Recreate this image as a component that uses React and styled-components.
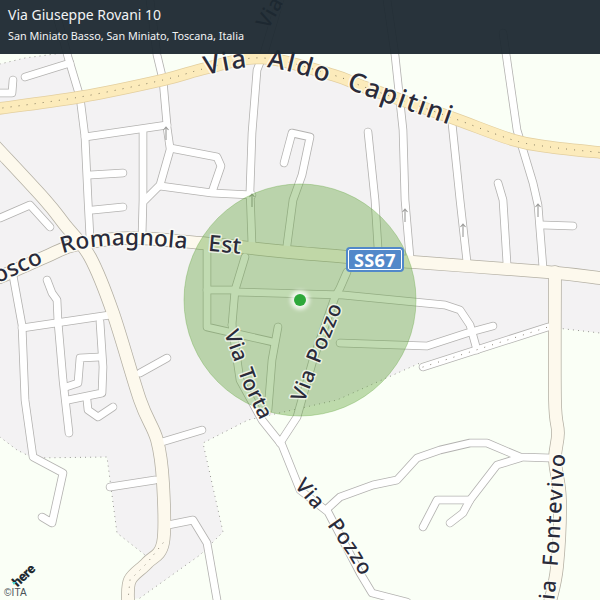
import React from "react";
import styled, { createGlobalStyle } from "styled-components";

const Global = createGlobalStyle`
  html, body { margin: 0; padding: 0; background: #faFFF6; }
`;

const Stage = styled.div`
  position: relative;
  width: 600px;
  height: 600px;
  overflow: hidden;
  font-family: "Noto Sans", "Open Sans", sans-serif;
`;

const MapSvg = styled.svg`
  display: block;
  width: 600px;
  height: 600px;
  background: #faFFF6;
`;

const Header = styled.header`
  position: absolute;
  inset: 0 0 auto 0;
  height: 54px;
  box-sizing: border-box;
  padding: 5px 8px 0;
  display: flex;
  flex-direction: column;
  gap: 2px;
  background: rgba(28, 40, 48, 0.95);
  color: #f2f4f5;
`;

const Title = styled.div`
  font-size: 14px;
  line-height: 19px;
  white-space: nowrap;
`;

const Subtitle = styled.div`
  font-size: 10.8px;
  line-height: 19px;
  white-space: nowrap;
`;

const Shield = styled.div`
  position: absolute;
  left: 346px;
  top: 247px;
  width: 58px;
  height: 25px;
  box-sizing: border-box;
  padding: 2px;
  border-radius: 4px;
  background: #5288c9;
`;

const ShieldInner = styled.div`
  width: 100%;
  height: 100%;
  box-sizing: border-box;
  border: 1.5px solid #ffffff;
  border-radius: 2px;
  display: flex;
  align-items: center;
  justify-content: center;
  color: #ffffff;
  font-size: 18px;
  line-height: 18px;
  font-weight: 700;
  letter-spacing: 0.4px;
`;

const Attribution = styled.div`
  position: absolute;
  left: 4px;
  bottom: 2px;
  width: 40px;
  display: flex;
  flex-direction: column;
  align-items: flex-start;
`;

const LogoMark = styled.div`
  position: relative;
  height: 23px;
  width: 36px;
`;

const LogoWord = styled.span`
  position: absolute;
  left: 7px;
  top: 5px;
  font-family: Roboto, "Liberation Sans", sans-serif;
  font-size: 13.5px;
  line-height: 13px;
  font-weight: 900;
  letter-spacing: -0.5px;
  color: #1f2a30;
  transform: rotate(-43deg);
`;

const LogoTick = styled.span`
  position: absolute;
  left: 8px;
  top: 18px;
  width: 0;
  height: 0;
  border-left: 2.5px solid transparent;
  border-right: 2.5px solid transparent;
  border-top: 3.5px solid #48dad0;
`;

const Copyright = styled.div`
  font-family: "Liberation Sans", sans-serif;
  font-size: 10px;
  line-height: 11px;
  letter-spacing: 0.2px;
  color: #4b5358;
`;

const Label = styled.text`
  font-family: "Noto Sans", "Open Sans", sans-serif;
  font-size: ${(p) => p.$size}px;
  font-weight: 500;
  letter-spacing: ${(p) => p.$spacing ?? 0}px;
  word-spacing: ${(p) => p.$words ?? 0}px;
  fill: #2a2b3a;
  stroke: rgba(255, 255, 250, 0.72);
  stroke-width: 3px;
  stroke-linejoin: round;
  paint-order: stroke;
`;

const Casing = styled.path`
  fill: none;
  stroke: ${(p) => p.$color};
  stroke-width: ${(p) => p.$width}px;
  stroke-linecap: round;
  stroke-linejoin: round;
`;

const Dots = styled.path`
  fill: none;
  stroke: ${(p) => p.$color || "#7b7466"};
  stroke-width: ${(p) => p.$width || 1}px;
  stroke-linecap: round;
  stroke-dasharray: 0.1 ${(p) => p.$gap || 8}px;
`;

const poly = (pts) => "M" + pts.map((p) => p.join(" ")).join("L");

const smooth = (pts) => {
  let d = `M${pts[0][0]} ${pts[0][1]}`;
  for (let i = 0; i < pts.length - 1; i++) {
    const p0 = pts[i - 1] || pts[i];
    const p1 = pts[i];
    const p2 = pts[i + 1];
    const p3 = pts[i + 2] || p2;
    const c1 = [p1[0] + (p2[0] - p0[0]) / 6, p1[1] + (p2[1] - p0[1]) / 6];
    const c2 = [p2[0] - (p3[0] - p1[0]) / 6, p2[1] - (p3[1] - p1[1]) / 6];
    d += `C${c1[0].toFixed(1)} ${c1[1].toFixed(1)} ${c2[0].toFixed(1)} ${c2[1].toFixed(1)} ${p2[0]} ${p2[1]}`;
  }
  return d;
};

const builtUp = [
  [0, 64], [25, 58], [70, 52], [78, 95], [163, 80], [263, 58], [333, 75], [450, 117],
  [513, 140], [600, 152], [600, 333], [548, 327], [420, 363], [337, 400], [248, 420],
  [203, 443], [223, 532], [200, 555], [140, 598], [128, 600], [128, 580], [145, 555],
  [117, 533], [107, 457], [33, 458], [17, 450], [0, 437],
];

const boundary = [
  [[0, 64], [25, 58], [70, 52]],
  [[0, 437], [17, 450], [33, 458], [107, 457], [117, 533], [145, 555]],
  [[140, 598], [200, 555], [223, 532], [203, 443], [248, 420], [337, 400], [420, 363]],
  [[548, 327], [600, 333]],
];

const localRoads = [
  [[58, 20], [68, 57], [80, 97], [85, 137], [88, 200], [90, 238]],
  [[150, 0], [157, 55], [163, 80], [167, 125]],
  [[85, 137], [167, 125]],
  [[143, 132], [143, 200], [142, 236]],
  [[167, 127], [170, 148], [217, 157], [221, 166], [212, 192]],
  [[170, 150], [160, 185], [145, 200]],
  [[160, 186], [212, 193], [252, 195]],
  [[90, 175], [123, 173]],
  [[280, 0], [265, 50], [257, 70], [252, 133], [250, 190], [252, 245]],
  [[284, 163], [292, 133], [310, 137], [302, 175], [293, 200], [287, 245]],
  [[387, 0], [395, 55], [403, 130], [405, 200], [410, 258]],
  [[368, 132], [375, 200], [378, 248]],
  [[452, 123], [460, 200], [467, 262]],
  [[498, 183], [503, 200], [507, 264]],
  [[503, 33], [517, 130], [533, 183], [538, 205], [543, 268]],
  [[543, 225], [573, 226]],
  [[25, 77], [70, 63]],
  [[0, 93], [12, 93], [13, 80]],
  [[12, 270], [22, 325], [25, 400], [33, 457], [63, 473], [52, 523], [42, 517]],
  [[22, 328], [110, 315]],
  [[47, 280], [52, 293], [57, 300], [58, 322], [63, 380], [69, 433]],
  [[100, 322], [103, 367], [102, 393], [68, 400]],
  [[100, 357], [80, 358], [78, 383], [66, 387]],
  [[113, 407], [98, 417], [88, 410], [87, 400]],
  [[0, 218], [30, 205], [50, 227]],
  [[93, 210], [123, 207]],
  [[140, 373], [167, 358]],
  [[162, 442], [202, 430]],
  [[110, 487], [155, 480]],
  [[168, 525], [193, 520], [207, 543], [217, 600]],
  [[207, 250], [207, 327], [273, 342]],
  [[207, 290], [233, 290]],
  [[236, 292], [343, 295], [445, 305], [460, 310], [470, 325], [477, 350]],
  [[245, 257], [235, 290], [232, 325]],
  [[278, 327], [272, 360], [268, 410]],
  [[232, 325], [240, 380], [262, 420], [282, 445], [300, 490], [328, 512], [360, 573], [372, 593], [407, 602]],
  [[347, 272], [340, 288], [335, 297], [313, 360], [297, 417], [280, 443]],
  [[340, 343], [427, 346], [467, 333], [493, 326]],
  [[328, 508], [340, 497], [373, 485], [397, 480], [417, 458], [440, 450], [470, 443], [487, 443], [520, 457], [550, 458]],
  [[520, 458], [497, 465], [470, 500], [463, 513], [450, 523]],
  [[470, 500], [437, 500], [423, 527]],
  [[423, 367], [548, 327]],
];

const majorRoads = [
  [[0, 277], [45, 257], [75, 245], [130, 238], [200, 243], [300, 253], [413, 262], [547, 272], [600, 278]],
  [[555, 272], [555, 400], [558, 433], [555, 460], [560, 500], [557, 567], [550, 602]],
  [[-5, 146], [45, 200], [65, 225], [90, 257], [113, 313], [140, 400], [157, 440], [163, 483], [163, 543], [147, 563], [130, 580], [128, 602]],
];

const mainRoad = [
  [-5, 109], [80, 97], [163, 80], [207, 68], [263, 58], [333, 75], [367, 88], [450, 117], [513, 140], [550, 147], [605, 153],
];

const arrows = [[166, 133], [405, 215], [463, 230], [538, 210], [252, 200]];

const paths = {
  capitini: smooth([[200, 76], [263, 67], [333, 84], [367, 96], [470, 132]]),
  romagnola: smooth([[-28, 292], [0, 282], [45, 262], [75, 250], [130, 245], [200, 250], [300, 260]]),
  torta: poly([[224, 333], [243, 385], [262, 424]]),
  pozzoUp: poly([[304, 403], [325, 350], [345, 300]]),
  viaLower: poly([[294, 486], [320, 516]]),
  pozzoLower: poly([[327, 525], [347, 553], [368, 588]]),
  fontevivo: smooth([[553, 615], [558, 560], [562, 500], [566, 440]]),
  viaTop: poly([[268, 30], [285, 0], [292, -15]]),
};

const LabelOnPath = ({ id, start = 0, size, spacing, words, children }) => (
  <Label $size={size} $spacing={spacing} $words={words}>
    <textPath href={`#${id}`} startOffset={start}>{children}</textPath>
  </Label>
);

export default function App() {
  return (
    <Stage>
      <Global />
      <MapSvg viewBox="0 0 600 600">
        <defs>
          {Object.entries(paths).map(([id, d]) => <path key={id} id={id} d={d} />)}
          <filter id="glow" x="-100%" y="-100%" width="300%" height="300%">
            <feGaussianBlur stdDeviation="2" />
          </filter>
        </defs>

        <polygon points={builtUp.map((p) => p.join(",")).join(" ")} fill="#f3f2f3" />
        {boundary.map((b, i) => <Dots key={i} d={poly(b)} $gap={5} $color="#8c8c86" />)}

        {localRoads.map((r, i) => <Casing key={i} d={poly(r)} $color="#b3b2b0" $width={8.5} />)}
        {majorRoads.map((r, i) => <Casing key={i} d={smooth(r)} $color="#b4b0a4" $width={13.5} />)}
        {localRoads.map((r, i) => <Casing key={i} d={poly(r)} $color="#ffffff" $width={6.9} />)}
        {majorRoads.map((r, i) => <Casing key={i} d={smooth(r)} $color="#fdf9ed" $width={12} />)}

        <Dots d={poly(localRoads[localRoads.length - 1])} $gap={8} />
        <Dots d={poly([[163, 543], [147, 563], [130, 580], [128, 600]])} $gap={7} />

        <Casing d={smooth(mainRoad)} $color="#e3cf9f" $width={12.5} />
        <Casing d={smooth(mainRoad)} $color="#fcebbb" $width={11} />
        <Dots d={smooth(mainRoad)} $gap={8} $color="#6f674f" />

        {arrows.map(([x, y], i) => (
          <path key={i} transform={`translate(${x} ${y})`} d="M0 7V-6M-2.5 -3L0 -6L2.5 -3" fill="none" stroke="#9a9a98" strokeWidth="1.1" />
        ))}

        <circle cx="300" cy="300" r="116" fill="rgba(100,165,62,0.4)" stroke="rgba(100,165,62,0.35)" strokeWidth="1" />

        <LabelOnPath id="capitini" start={6} size={26} spacing={2} words={9}>Via Aldo Capitini</LabelOnPath>
        <LabelOnPath id="romagnola" start={12} size={22.6} spacing={0.2} words={15}>Bosco Romagnola Est</LabelOnPath>
        <LabelOnPath id="torta" size={21} spacing={0.6} words={2}>Via Torta</LabelOnPath>
        <LabelOnPath id="pozzoUp" size={21} spacing={0.9} words={2}>Via Pozzo</LabelOnPath>
        <LabelOnPath id="viaLower" size={21} spacing={0.8}>Via</LabelOnPath>
        <LabelOnPath id="pozzoLower" size={21} spacing={0.9}>Pozzo</LabelOnPath>
        <LabelOnPath id="fontevivo" size={21.5} spacing={1.6} words={5}>Via Fontevivo</LabelOnPath>
        <LabelOnPath id="viaTop" size={21} spacing={0.6}>Via</LabelOnPath>

        <circle cx="300" cy="300" r="9.5" fill="#ffffff" opacity="0.85" filter="url(#glow)" />
        <circle cx="300" cy="300" r="6" fill="#2da83a" />
      </MapSvg>

      <Shield>
        <ShieldInner>SS67</ShieldInner>
      </Shield>

      <Header>
        <Title>Via Giuseppe Rovani 10</Title>
        <Subtitle>San Miniato Basso, San Miniato, Toscana, Italia</Subtitle>
      </Header>

      <Attribution>
        <LogoMark>
          <LogoWord>here</LogoWord>
          <LogoTick />
        </LogoMark>
        <Copyright>©ITA</Copyright>
      </Attribution>
    </Stage>
  );
}
